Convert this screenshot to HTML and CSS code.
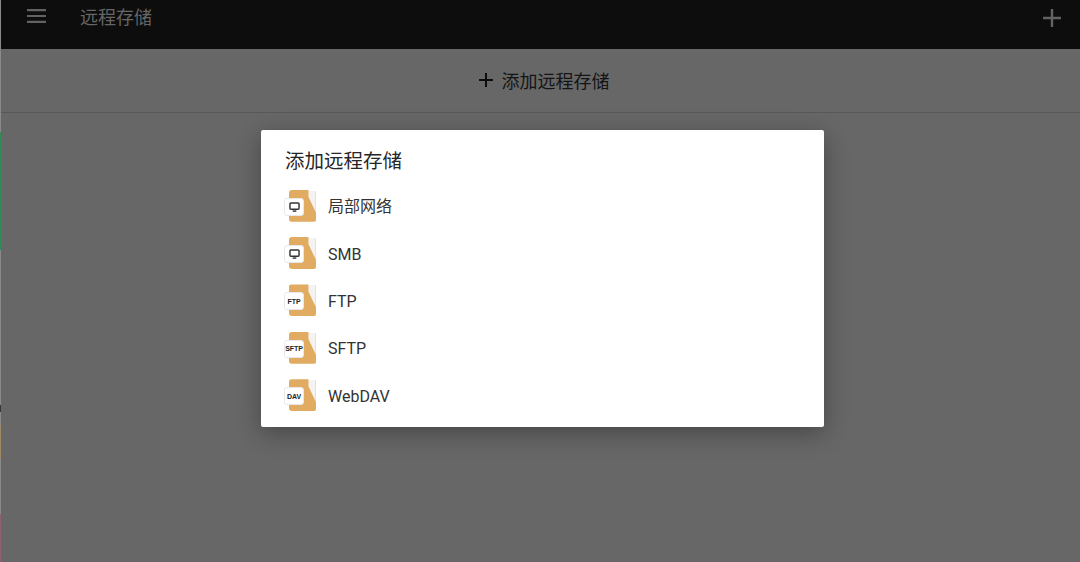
FILE: index.html
```html
<!DOCTYPE html>
<html lang="zh">
<head>
<meta charset="utf-8">
<title>远程存储</title>
<link rel="stylesheet" href="styles.css">
</head>
<body>
<div class="edge"></div>
<main class="app">
  <header class="topbar">
    <svg class="menu" viewBox="0 0 19 14"><path d="M0 1.2h19M0 7h19M0 12.8h19"/></svg>
    <h1 class="title">远程存储</h1>
    <svg class="add" viewBox="0 0 18 18"><path d="M9 0v18M0 9h18"/></svg>
  </header>
  <div class="addrow">
    <svg class="addrow-icon" viewBox="0 0 14 14"><path d="M7 0v14M0 7h14"/></svg>
    <span>添加远程存储</span>
  </div>
</main>
<div class="dialog-layer">
  <section class="dialog">
    <h2 class="dialog-title">添加远程存储</h2>
    <ul class="list">
      <li class="item">
        <span class="ficon"><span class="sheet"></span><span class="folder"></span><span class="badge"><svg class="monitor" viewBox="0 0 12 11"><rect x="1" y="1" width="10" height="7" rx="1"/><path d="M4 10h4"/></svg></span></span>
        <span class="label-cjk">局部网络</span>
      </li>
      <li class="item">
        <span class="ficon"><span class="sheet"></span><span class="folder"></span><span class="badge"><svg class="monitor" viewBox="0 0 12 11"><rect x="1" y="1" width="10" height="7" rx="1"/><path d="M4 10h4"/></svg></span></span>
        <span class="label">SMB</span>
      </li>
      <li class="item">
        <span class="ficon"><span class="sheet"></span><span class="folder"></span><span class="badge"><b class="tag">FTP</b></span></span>
        <span class="label">FTP</span>
      </li>
      <li class="item">
        <span class="ficon"><span class="sheet"></span><span class="folder"></span><span class="badge"><b class="tag">SFTP</b></span></span>
        <span class="label">SFTP</span>
      </li>
      <li class="item">
        <span class="ficon"><span class="sheet"></span><span class="folder"></span><span class="badge"><b class="tag">DAV</b></span></span>
        <span class="label">WebDAV</span>
      </li>
    </ul>
  </section>
</div>
</body>
</html>
```
FILE: styles.css
```css
* { box-sizing: border-box; }
html, body { height: 100%; }
body {
  margin: 0;
  display: flex;
  height: 562px;
  overflow: hidden;
  background: #676767;
  font-family: Roboto, "Noto Sans CJK SC", sans-serif;
}
.edge {
  width: 1px;
  flex: none;
  background: linear-gradient(to bottom,
    #8a8a8a 0, #8a8a8a 132px,
    #2f8a57 132px, #2f8a57 250px,
    #8a8a8a 250px, #8a8a8a 405px,
    #33383f 405px, #33383f 412px,
    #8a8a8a 412px, #8a8a8a 425px,
    #a08a66 425px, #a08a66 458px,
    #8a8a8a 458px, #8a8a8a 514px,
    #8f5f74 514px, #8f5f74 562px);
}
.app { flex: 1; display: flex; flex-direction: column; min-width: 0; }
.topbar {
  height: 49px;
  flex: none;
  background: #0d0d0d;
  display: flex;
  align-items: flex-start;
  padding: 9px 19px 0 26px;
}
.menu { width: 19px; height: 14px; flex: none; margin-right: 34px; }
.menu path { stroke: #626262; stroke-width: 2.2; fill: none; }
.title {
  margin: -1px 0 0;
  font-size: 18px;
  line-height: 20px;
  font-weight: 400;
  color: #666;
}
.add { width: 18px; height: 18px; margin-left: auto; flex: none; }
.add path { stroke: #626262; stroke-width: 2.4; fill: none; }
.addrow {
  height: 64px;
  flex: none;
  border-bottom: 1px solid #585858;
  display: flex;
  align-items: center;
  justify-content: center;
  gap: 9px;
  padding: 0 0 2px 7px;
  font-size: 18px;
  color: #141414;
}
.addrow-icon { width: 14px; height: 14px; flex: none; }
.addrow-icon path { stroke: #0c0c0c; stroke-width: 2; fill: none; }
.dialog-layer {
  position: absolute;
  left: 261px;
  top: 130px;
}
.dialog {
  width: 563px;
  height: 297px;
  background: #fff;
  border-radius: 2px;
  box-shadow: 0 6px 24px rgba(0, 0, 0, .32);
  padding: 19px 23px 0;
}
.dialog-title {
  margin: 0 0 0 1px;
  font-size: 19.5px;
  line-height: 26px;
  font-weight: 400;
  color: #262626;
}
.list { list-style: none; margin: 7px 0 0; padding: 0; }
.item {
  height: 47.4px;
  display: flex;
  align-items: center;
  gap: 12px;
  font-size: 16px;
  color: #333;
}
.label { padding-top: 2px; }
.label-cjk { padding-bottom: 2px; }
.ficon { position: relative; width: 32px; height: 32px; flex: none; }
.sheet {
  position: absolute;
  left: 22px;
  top: 1px;
  width: 10px;
  height: 29px;
  background: #f5f3ef;
  border-right: 1px solid #e4e1db;
  border-radius: 1px;
}
.folder {
  position: absolute;
  left: 5px;
  top: 0;
  width: 27px;
  height: 32px;
  background: #e2ab62;
  border-radius: 3px 0 2px 3px;
  clip-path: polygon(0 0, 72% 0, 72% 22%, 100% 72%, 100% 100%, 0 100%);
}
.badge {
  position: absolute;
  left: 0;
  top: 8px;
  width: 20px;
  height: 18px;
  background: #fff;
  border: 1px solid #e8e8e8;
  border-radius: 3px;
  display: flex;
  align-items: center;
  justify-content: center;
}
.monitor { width: 11px; height: 10px; }
.monitor rect, .monitor path { fill: none; stroke: #333; stroke-width: 1.6; }
.tag {
  font-family: "Liberation Sans", sans-serif;
  font-size: 7px;
  font-weight: 700;
  letter-spacing: -.1px;
  color: #222;
  white-space: nowrap;
}
```
